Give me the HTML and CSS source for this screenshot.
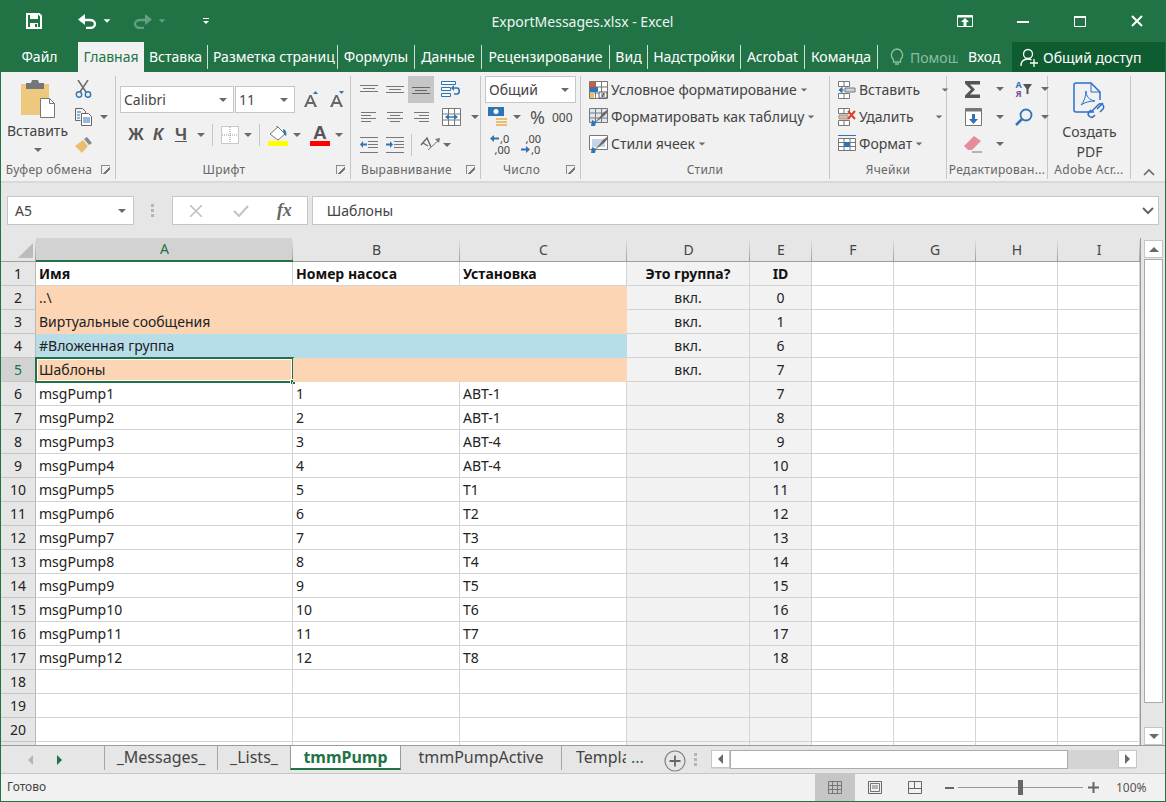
FILE: index.html
```html
<!DOCTYPE html>
<html lang="ru">
<head>
    <meta charset="UTF-8">
    <title>ExportMessages.xlsx - Excel</title>
    <link rel="stylesheet" href="styles.css">
</head>
<body>
<div class="window">
    <header class="titlebar">
        <div class="qat">
            <svg class="save" width="16" height="16" viewBox="0 0 16 16"><path d="M1 1h12l2 2v12H1z" fill="none" stroke="#fff" stroke-width="2"/><path d="M4 1h8v5H4z" fill="#fff"/><path d="M4 10h8v5H4z" fill="#fff"/><path d="M9 11h2v3H9z" fill="#217346"/></svg>
            <svg class="undo" width="19" height="15" viewBox="0 0 19 15"><path d="M2 6h10a5 4 0 0 1 0 8H8" fill="none" stroke="#fff" stroke-width="2.4"/><path d="M7 0v11L0 5.500z" fill="#fff"/></svg>
            <span class="caret white"></span>
            <svg class="redo" width="19" height="15" viewBox="0 0 19 15"><path d="M17 6H7a5 4 0 0 0 0 8h4" fill="none" stroke="#62a083" stroke-width="2.4"/><path d="M12 0v11l7-5.500z" fill="#62a083"/></svg>
            <span class="caret dim"></span>
            <span class="customize"></span>
        </div>
        <div class="doc-title">ExportMessages.xlsx - Excel</div>
        <div class="win-controls">
            <svg class="ctl-ribbon" width="16" height="12" viewBox="0 0 16 12"><path d="M.5.500h15v11H.5z" fill="none" stroke="#fff"/><path d="M.5.500h15v2H.5z" fill="#fff"/><path d="M8 3l4 4H9.500v4h-3V7H4z" fill="#fff"/></svg>
            <svg class="ctl-min" width="12" height="12" viewBox="0 0 12 12"><path d="M0 6h12v2H0z" fill="#fff"/></svg>
            <svg class="ctl-max" width="12" height="12" viewBox="0 0 12 12"><path d="M.5 1.500h11v10H.5z" fill="none" stroke="#fff"/><path d="M0 1h12v2H0z" fill="#fff"/></svg>
            <svg class="ctl-close" width="12" height="12" viewBox="0 0 12 12"><path d="M1 1l10 10M11 1L1 11" stroke="#fff" stroke-width="2"/></svg>
        </div>
    </header>

    <nav class="tabs">
        <span class="tab tab-file">Файл</span>
        <span class="tab tab-active">Главная</span>
        <span class="tab w-58">Вставка</span>
        <span class="tab w-130">Разметка страниц</span>
        <span class="tab w-77">Формулы</span>
        <span class="tab w-67">Данные</span>
        <span class="tab w-128">Рецензирование</span>
        <span class="tab w-38">Вид</span>
        <span class="tab w-93">Надстройки</span>
        <span class="tab w-64">Acrobat</span>
        <span class="tab w-73">Команда</span>
        <span class="tab-help">
            <svg width="14" height="18" viewBox="0 0 14 18"><path d="M7 1a6 6 0 0 0-3.500 10.500V14h7v-2.500A6 6 0 0 0 7 1z" fill="none" stroke="#8fbca5" stroke-width="1.300"/><path d="M5 16h4" stroke="#8fbca5" stroke-width="1.500"/></svg>
            <span class="help-text">Помощ</span>
        </span>
        <span class="tab-login">Вход</span>
        <span class="share">
            <svg width="18" height="19" viewBox="0 0 18 19"><circle cx="8" cy="6" r="4.500" fill="none" stroke="#fff" stroke-width="1.300"/><path d="M1 18c0-5 3-7 7-7 1.500 0 2.500.3 3.500 1" fill="none" stroke="#fff" stroke-width="1.300"/><path d="M10 15h8M14 11v8" stroke="#fff" stroke-width="1.300"/></svg>
            Общий доступ
        </span>
    </nav>

    <section class="ribbon">
        <div class="group g-clip">
            <div class="group-body clip-body">
                <div class="paste">
                    <svg width="34" height="38" viewBox="0 0 34 38"><path d="M0 4h28v31H0z" fill="#edc87e"/><path d="M5 3h5l1-3h6l1 3h5v6H5z" fill="#767676"/><path d="M19.500 18.500h9l5 5v14h-14z" fill="#fff" stroke="#777"/><path d="M28.500 18.500v5h5" fill="none" stroke="#777"/></svg>
                    <span class="paste-label">Вставить</span>
                    <span class="caret"></span>
                </div>
                <div class="clip-tools">
                    <svg width="17" height="18" viewBox="0 0 17 18"><path d="M3 0l8 12M13 0L5 12" stroke="#6a6a6a" stroke-width="1.500"/><circle cx="4" cy="14.500" r="2.700" fill="none" stroke="#2f75b5" stroke-width="1.400"/><circle cx="13" cy="14.500" r="2.700" fill="none" stroke="#2f75b5" stroke-width="1.400"/></svg>
                    <div class="row-tool"><svg width="18" height="18" viewBox="0 0 18 18"><path d="M.5.500h7l3 3v3M.5.500v12h5" fill="none" stroke="#666"/><path d="M6.500 5.500h7l3 3v9h-10z" fill="#fff" stroke="#666"/><path d="M2 4h4M2 7h3M2 10h3" stroke="#2f75b5"/><path d="M8 10h7M8 12h7M8 14h7" stroke="#2f75b5"/></svg><span class="caret"></span></div>
                    <svg width="18" height="16" viewBox="0 0 18 16"><path d="M0 9l8-6 5 6-6 7z" fill="#e8bf72"/><path d="M9 2l3-2 5 6-3 2z" fill="#888"/></svg>
                </div>
            </div>
            <div class="group-label">Буфер обмена<i class="launcher"></i></div>
        </div>

        <div class="group g-font">
            <div class="group-body font-body">
                <div class="font-top">
                    <span class="combo font-name">Calibri<span class="caret"></span></span>
                    <span class="combo font-size">11<span class="caret"></span></span>
                    <svg class="grow" width="16" height="17" viewBox="0 0 16 17"><path d="M1 16L6.500 4h2L14 16h-2.500l-1.200-3H4.700l-1.200 3zM5.500 11h4L7.500 6z" fill="#666"/><path d="M10 3l2.500-3L15 3z" fill="#2f75b5"/></svg>
                    <svg class="shrink" width="16" height="17" viewBox="0 0 16 17"><path d="M1 16L6.500 4h2L14 16h-2.500l-1.200-3H4.700l-1.200 3zM5.500 11h4L7.500 6z" fill="#666"/><path d="M10 0l2.500 3L15 0z" fill="#2f75b5"/></svg>
                </div>
                <div class="font-bottom">
                    <b class="fmt fmt-b">Ж</b>
                    <b class="fmt fmt-i">К</b>
                    <b class="fmt fmt-u">Ч</b>
                    <span class="caret"></span>
                    <i class="vsep"></i>
                    <svg width="18" height="18" viewBox="0 0 18 18"><path d="M.5.500h17v17H.5z" fill="#fff" stroke="#999" stroke-dasharray="1 1"/><path d="M9 1v16M1 9h16" stroke="#999" stroke-dasharray="1 1"/></svg>
                    <span class="caret"></span>
                    <i class="vsep"></i>
                    <span class="color-tool">
                        <svg width="20" height="15" viewBox="0 0 20 15"><path d="M2 8l8-7 7 7-7 6z" fill="#fff" stroke="#777"/><path d="M10 1L8 0" stroke="#777"/><path d="M15 3c3 1 4 4 3 7-2-1-3-4-3-7z" fill="#2f75b5"/></svg>
                        <i class="swatch yellow"></i>
                    </span>
                    <span class="caret"></span>
                    <span class="color-tool color-a">
                        <b class="a-letter">A</b>
                        <i class="swatch red"></i>
                    </span>
                    <span class="caret"></span>
                </div>
            </div>
            <div class="group-label">Шрифт<i class="launcher"></i></div>
        </div>

        <div class="group g-align">
            <div class="group-body align-body">
                <svg class="ico" width="18" height="10" viewBox="0 0 18 10"><path d="M0 .500h18M3 3.500h12M0 6.500h18" stroke="#777"/></svg>
                <svg class="ico" width="18" height="10" viewBox="0 0 18 10"><path d="M0 1.500h18M3 4.500h12M0 7.500h18" stroke="#777"/></svg>
                <span class="ico align-on"><svg width="18" height="10" viewBox="0 0 18 10"><path d="M0 2.500h18M3 5.500h12M0 8.500h18" stroke="#666"/></svg></span>
                <svg class="ico" width="20" height="18" viewBox="0 0 20 18"><path d="M.5.500h14v3H.5zM.5 6.500h9v3H.5zM.5 12.500h9v3H.5z" fill="#fff" stroke="#2f75b5"/><path d="M13 13h3c3 0 3-6 0-6h-5" fill="none" stroke="#2f75b5" stroke-width="1.600"/><path d="M13 4l-3 3 3 3z" fill="#2f75b5"/></svg>
                <span></span>

                <svg class="ico" width="16" height="11" viewBox="0 0 16 11"><path d="M0 .500h15M0 3.500h10M0 6.500h15M0 9.500h10" stroke="#777"/></svg>
                <svg class="ico" width="16" height="11" viewBox="0 0 16 11"><path d="M0 .500h16M3 3.500h10M0 6.500h16M3 9.500h10" stroke="#777"/></svg>
                <svg class="ico" width="16" height="11" viewBox="0 0 16 11"><path d="M1 .500h15M6 3.500h10M1 6.500h15M6 9.500h10" stroke="#777"/></svg>
                <svg class="ico" width="19" height="18" viewBox="0 0 19 18"><path d="M.5.500h18v17H.5zM.5 6h18M.5 12h18M6.500.500V6M12.500.500V6M6.500 12v5.500M12.500 12v5.500" fill="#fff" stroke="#777"/><path d="M4 9h11" stroke="#2f75b5" stroke-width="1.500"/><path d="M7 6l-4 3 4 3zM12 6l4 3-4 3z" fill="#2f75b5"/></svg>
                <span class="caret"></span>

                <svg class="ico" width="18" height="16" viewBox="0 0 18 16"><path d="M0 .500h18M8 4.500h10M8 7.500h10M8 10.500h10M0 15.500h18" stroke="#777"/><path d="M7 6.500H3V4L0 7.500 3 11V8.500h4z" fill="#2f75b5"/></svg>
                <svg class="ico" width="18" height="16" viewBox="0 0 18 16"><path d="M0 .500h18M8 4.500h10M8 7.500h10M8 10.500h10M0 15.500h18" stroke="#777"/><path d="M0 6.500h4V4l3 3.500L4 11V8.500H0z" fill="#2f75b5"/></svg>
                <span class="orient">
                    <i class="vsep"></i>
                    <svg width="21" height="18" viewBox="0 0 21 18"><path d="M1 9l6-7 4 9M3 7l5 3" fill="none" stroke="#666" stroke-width="1.400"/><path d="M8 14l11-10" stroke="#777"/><path d="M15 3l5-1-1 5z" fill="#777"/></svg>
                    <span class="caret"></span>
                </span>
            </div>
            <div class="group-label">Выравнивание<i class="launcher"></i></div>
        </div>

        <div class="group g-number">
            <div class="group-body number-body">
                <span class="combo number-format">Общий<span class="caret"></span></span>
                <div class="number-row">
                    <svg width="20" height="20" viewBox="0 0 20 20"><path d="M0 0h16v9H0z" fill="#2f75b5"/><circle cx="8" cy="4.500" r="2.500" fill="#fff"/><path d="M8 11h11v2H8zM8 14h11v2H8zM8 17h11v2H8z" fill="#e8bf72"/></svg>
                    <span class="caret"></span>
                    <span class="percent">%</span>
                    <span class="thousands">000</span>
                </div>
                <div class="number-row decimals">
                    <span class="dec"><svg width="9" height="7" viewBox="0 0 9 7"><path d="M4 0L0 3.500 4 7V4.500h5v-2H4z" fill="#2f75b5"/></svg><span>,0</span><span class="dec-wide">,00</span></span>
                    <span class="dec"><span class="dec-wide">,00</span><svg width="9" height="7" viewBox="0 0 9 7"><path d="M5 0l4 3.500L5 7V4.500H0v-2h5z" fill="#2f75b5"/></svg><span>,0</span></span>
                </div>
            </div>
            <div class="group-label">Число<i class="launcher"></i></div>
        </div>

        <div class="group g-styles">
            <div class="group-body list-body">
                <div class="list-item">
                    <svg width="19" height="18" viewBox="0 0 19 18"><path d="M.5.500h18v17H.5zM.5 6h18M.5 12h18M6.500.500v17M12.500.500v17" fill="#fff" stroke="#777"/><path d="M1 1h5v5H1z" fill="#d8593a"/><path d="M1 6h8v5H1z" fill="#2f75b5"/><path d="M1 12h4v5H1z" fill="#e8bf72"/><path d="M10 11h8v6h-8z" fill="#fff" stroke="#555"/><path d="M12 13h4M12 15h4M15 12l-2 4" stroke="#333" stroke-width=".8"/></svg>
                    Условное форматирование<span class="caret"></span>
                </div>
                <div class="list-item">
                    <svg width="19" height="18" viewBox="0 0 19 18"><path d="M.5.500h18v14H.5zM.5 5h18M.5 10h18M6.500.500v14M12.500.500v14" fill="#dfe6ef" stroke="#777"/><path d="M4 16l6-6 4-5 4-3 1 1-3 4-5 4z" fill="#666"/><path d="M3 12l4 2-1 4H2z" fill="#2f75b5"/></svg>
                    Форматировать как таблицу<span class="caret"></span>
                </div>
                <div class="list-item">
                    <svg width="19" height="18" viewBox="0 0 19 18"><path d="M.5.500h18v14H.5z" fill="#fff" stroke="#777"/><path d="M3 4h13v8H3z" fill="#c5d4e6"/><path d="M4 16l6-6 4-5 4-3 1 1-3 4-5 4z" fill="#666"/><path d="M3 12l4 2-1 4H2z" fill="#2f75b5"/></svg>
                    Стили ячеек<span class="caret"></span>
                </div>
            </div>
            <div class="group-label plain">Стили</div>
        </div>

        <div class="group g-cells">
            <div class="group-body list-body">
                <div class="list-item">
                    <svg width="18" height="18" viewBox="0 0 18 18"><path d="M.5.500h11v5H.5zM.5 12.500h11v5H.5zM6 .500v5M6 12.500v5" fill="#fff" stroke="#777"/><path d="M7 7h10v4H7z" fill="#c5d4e6" stroke="#777"/><path d="M6 9H2M4 6.500L1 9l3 2.500z" fill="#2f75b5" stroke="#2f75b5"/></svg>
                    Вставить<span class="caret c-1"></span>
                </div>
                <div class="list-item">
                    <svg width="18" height="18" viewBox="0 0 18 18"><path d="M.5.500h11v5H.5zM.5 12.500h11v5H.5zM6 .500v5M6 12.500v5" fill="#fff" stroke="#777"/><path d="M1 7h9v4H1z" fill="#e9b49c" stroke="#999"/><path d="M10 3l7 8M17 3l-7 8" stroke="#d8432a" stroke-width="2"/></svg>
                    Удалить<span class="caret c-2"></span>
                </div>
                <div class="list-item">
                    <svg width="18" height="20" viewBox="0 0 18 20"><path d="M0 1.500h18" stroke="#2f75b5"/><path d="M.5 4.500h17v12H.5zM.5 8.500h17M.5 12.500h17M6 4.500v12M12 4.500v12" fill="#fff" stroke="#777"/><path d="M6 8h6v5H6z" fill="#2f75b5"/></svg>
                    Формат<span class="caret"></span>
                </div>
            </div>
            <div class="group-label plain">Ячейки</div>
        </div>

        <div class="group g-edit">
            <div class="group-body edit-body">
                <svg class="ico" width="16" height="17" viewBox="0 0 16 17"><path d="M0 0h15v3.500H5l5 5-5 5h10V17H0v-2.500L6 8.500 0 2.500z" fill="#555"/></svg>
                <span class="caret"></span>
                <span class="sort"><span class="sort-az"><i>А</i><i class="ya">Я</i></span><svg width="9" height="10" viewBox="0 0 9 10"><path d="M0 0h9L5.500 5v5h-2V5z" fill="#555"/></svg></span>
                <span class="caret"></span>
                <svg class="ico" width="17" height="18" viewBox="0 0 17 18"><path d="M.5.500h16v17H.5z" fill="#fff" stroke="#777"/><path d="M.5.500h16v3H.5z" fill="#777"/><path d="M7 6h3v5h3l-4.500 5L4 11h3z" fill="#2f75b5"/></svg>
                <span class="caret"></span>
                <svg class="ico" width="18" height="18" viewBox="0 0 18 18"><circle cx="11" cy="7" r="5.500" fill="none" stroke="#2f75b5" stroke-width="1.800"/><path d="M7 11l-6 6" stroke="#2f75b5" stroke-width="2.500"/></svg>
                <span class="caret"></span>
                <svg class="ico" width="18" height="17" viewBox="0 0 18 17"><path d="M0 10L10 0l7 5-9 9H4z" fill="#e58d9a"/><path d="M8 16h10" stroke="#777"/></svg>
                <span class="caret"></span>
            </div>
            <div class="group-label plain">Редактирован...</div>
        </div>

        <div class="group g-adobe">
            <div class="group-body adobe-body">
                <svg width="34" height="38" viewBox="0 0 34 38"><path d="M21 30H3a2 2 0 0 1-2-2V3a2 2 0 0 1 2-2h15l9 9v8" fill="none" stroke="#2b6fce" stroke-width="1.500"/><path d="M18 1v9h9" fill="none" stroke="#2b6fce"/><path d="M8 23c3-3 5-9 5-14 0 5 3 9 9 10-5 0-10 1-14 4z" fill="none" stroke="#2b6fce"/><path d="M18 30l7-7a3 3 0 0 1 5 4l-3 3M22 33l-1 1a3 3 0 0 1-5-4l2-2M30 21l-6 6" fill="none" stroke="#2b6fce" stroke-width="1.500"/></svg>
                <span class="adobe-text">Создать<br>PDF</span>
            </div>
            <div class="group-label plain">Adobe Acr...</div>
        </div>
        <svg class="collapse" width="12" height="7" viewBox="0 0 12 7"><path d="M1 6l5-5 5 5" fill="none" stroke="#666" stroke-width="1.600"/></svg>
    </section>

    <section class="formula">
        <div class="name-box">A5<span class="caret"></span></div>
        <div class="grip"><i></i><i></i><i></i></div>
        <div class="fx-box">
            <svg width="12" height="12" viewBox="0 0 12 12"><path d="M0 0l12 12M12 0L0 12" stroke="#c4c4c4" stroke-width="1.600"/></svg>
            <svg width="16" height="12" viewBox="0 0 16 12"><path d="M1 6l5 5L15 1" fill="none" stroke="#c4c4c4" stroke-width="2"/></svg>
            <span class="fx">fx</span>
        </div>
        <div class="formula-input">Шаблоны
            <svg width="12" height="8" viewBox="0 0 12 8"><path d="M1 1l5 5 5-5" fill="none" stroke="#666" stroke-width="2"/></svg>
        </div>
    </section>

    <section class="sheet">
        <div class="grid-wrap">
            <table class="grid">
                <colgroup>
                    <col class="c-head"><col class="c-a"><col class="c-b"><col class="c-b"><col class="c-d"><col class="c-e"><col class="c-f"><col class="c-f"><col class="c-f"><col class="c-f">
                </colgroup>
                <tr class="col-heads">
                    <th class="corner"><i></i></th><th class="sel-col">A</th><th>B</th><th>C</th><th>D</th><th>E</th><th>F</th><th>G</th><th>H</th><th>I</th>
                </tr>
                <tr class="bold"><th>1</th><td>Имя</td><td>Номер насоса</td><td>Установка</td><td class="shade mid">Это группа?</td><td class="shade mid">ID</td><td></td><td></td><td></td><td></td></tr>
                <tr><th>2</th><td class="orange" colspan="3">..\</td><td class="shade mid">вкл.</td><td class="shade mid">0</td><td></td><td></td><td></td><td></td></tr>
                <tr><th>3</th><td class="orange" colspan="3">Виртуальные сообщения</td><td class="shade mid">вкл.</td><td class="shade mid">1</td><td></td><td></td><td></td><td></td></tr>
                <tr><th>4</th><td class="blue" colspan="3">#Вложенная группа</td><td class="shade mid">вкл.</td><td class="shade mid">6</td><td></td><td></td><td></td><td></td></tr>
                <tr><th class="sel-row">5</th><td class="orange active">Шаблоны<span class="cursor"><i class="handle"></i></span></td><td class="orange" colspan="2"></td><td class="shade mid">вкл.</td><td class="shade mid">7</td><td></td><td></td><td></td><td></td></tr>
                <tr><th>6</th><td>msgPump1</td><td>1</td><td>АВТ-1</td><td class="shade"></td><td class="shade mid">7</td><td></td><td></td><td></td><td></td></tr>
                <tr><th>7</th><td>msgPump2</td><td>2</td><td>АВТ-1</td><td class="shade"></td><td class="shade mid">8</td><td></td><td></td><td></td><td></td></tr>
                <tr><th>8</th><td>msgPump3</td><td>3</td><td>АВТ-4</td><td class="shade"></td><td class="shade mid">9</td><td></td><td></td><td></td><td></td></tr>
                <tr><th>9</th><td>msgPump4</td><td>4</td><td>АВТ-4</td><td class="shade"></td><td class="shade mid">10</td><td></td><td></td><td></td><td></td></tr>
                <tr><th>10</th><td>msgPump5</td><td>5</td><td>Т1</td><td class="shade"></td><td class="shade mid">11</td><td></td><td></td><td></td><td></td></tr>
                <tr><th>11</th><td>msgPump6</td><td>6</td><td>Т2</td><td class="shade"></td><td class="shade mid">12</td><td></td><td></td><td></td><td></td></tr>
                <tr><th>12</th><td>msgPump7</td><td>7</td><td>Т3</td><td class="shade"></td><td class="shade mid">13</td><td></td><td></td><td></td><td></td></tr>
                <tr><th>13</th><td>msgPump8</td><td>8</td><td>Т4</td><td class="shade"></td><td class="shade mid">14</td><td></td><td></td><td></td><td></td></tr>
                <tr><th>14</th><td>msgPump9</td><td>9</td><td>Т5</td><td class="shade"></td><td class="shade mid">15</td><td></td><td></td><td></td><td></td></tr>
                <tr><th>15</th><td>msgPump10</td><td>10</td><td>Т6</td><td class="shade"></td><td class="shade mid">16</td><td></td><td></td><td></td><td></td></tr>
                <tr><th>16</th><td>msgPump11</td><td>11</td><td>Т7</td><td class="shade"></td><td class="shade mid">17</td><td></td><td></td><td></td><td></td></tr>
                <tr><th>17</th><td>msgPump12</td><td>12</td><td>Т8</td><td class="shade"></td><td class="shade mid">18</td><td></td><td></td><td></td><td></td></tr>
                <tr><th>18</th><td></td><td></td><td></td><td class="shade"></td><td class="shade"></td><td></td><td></td><td></td><td></td></tr>
                <tr><th>19</th><td></td><td></td><td></td><td class="shade"></td><td class="shade"></td><td></td><td></td><td></td><td></td></tr>
                <tr><th>20</th><td></td><td></td><td></td><td class="shade"></td><td class="shade"></td><td></td><td></td><td></td><td></td></tr>
                <tr><th></th><td></td><td></td><td></td><td class="shade"></td><td class="shade"></td><td></td><td></td><td></td><td></td></tr>
            </table>
        </div>
        <div class="vscroll">
            <span class="sb-btn"><i class="tri up"></i></span>
            <span class="sb-thumb"></span>
            <span class="sb-btn sb-end"><i class="tri down"></i></span>
        </div>
    </section>

    <section class="sheetbar">
        <div class="sheet-nav"><i class="tri left off"></i><i class="tri right on"></i></div>
        <div class="sheet-tab st-msg">_Messages_</div>
        <div class="sheet-tab st-lists">_Lists_</div>
        <div class="sheet-tab st-active">tmmPump</div>
        <div class="sheet-tab st-pa">tmmPumpActive</div>
        <div class="sheet-tab st-tpl">Templa</div>
        <span class="more">...</span>
        <svg class="add" width="22" height="22" viewBox="0 0 22 22"><circle cx="11" cy="11" r="10" fill="none" stroke="#808080" stroke-width="1.200"/><path d="M11 5.500v11M5.500 11h11" stroke="#666" stroke-width="1.800"/></svg>
        <div class="grip small"><i></i><i></i><i></i></div>
        <div class="hscroll">
            <span class="sb-btn h"><i class="tri left"></i></span>
            <span class="h-thumb"></span>
            <span class="sb-btn h"><i class="tri right"></i></span>
        </div>
    </section>

    <footer class="status">
        <span class="ready">Готово</span>
        <span class="view view-on"><svg width="14" height="13" viewBox="0 0 14 13"><path d="M.5.500h13v12H.5zM.5 4.500h13M.5 8.500h13M4.500.500v12M9.500.500v12" fill="none" stroke="#777"/></svg></span>
        <span class="view"><svg width="14" height="13" viewBox="0 0 14 13"><path d="M.5.500h13v12H.5z" fill="none" stroke="#666"/><path d="M2.500 2.500h9v8h-9zM4 5h6M4 7h6" fill="none" stroke="#777"/></svg></span>
        <span class="view"><svg width="14" height="13" viewBox="0 0 14 13"><path d="M.5.500h13v12H.5zM.5 7.500h13M6.500.500v7" fill="none" stroke="#666"/></svg></span>
        <div class="zoom">
            <i class="z-minus"></i>
            <span class="z-track"><i class="z-thumb"></i></span>
            <svg width="11" height="11" viewBox="0 0 11 11"><path d="M4.500 0h2v4.500H11v2H6.500V11h-2V6.500H0v-2h4.500z" fill="#666"/></svg>
            <span class="z-val">100%</span>
        </div>
    </footer>
</div>
</body>
</html>
```

FILE: styles.css
```css
* {
    margin: 0;
    padding: 0;
    box-sizing: border-box;
}

body {
    width: 1166px;
    height: 802px;
    overflow: hidden;
    font-family: "Noto Sans", "Open Sans", sans-serif;
    font-size: 14px;
    color: #444;
}

i {
    display: block;
    font-style: normal;
}

svg {
    display: block;
    flex: none;
}

.window {
    width: 1166px;
    height: 802px;
    display: flex;
    flex-direction: column;
    border: 1px solid #217346;
    border-top: 0;
    background: #e6e6e6;
}

.caret {
    display: inline-block;
    flex: none;
    width: 0;
    height: 0;
    border-left: 4px solid transparent;
    border-right: 4px solid transparent;
    border-top: 4px solid #6a6a6a;
}

.caret.white { border-top-color: #fff; }
.caret.dim { border-top-color: #62a083; }

/* title bar */
.titlebar {
    height: 42px;
    flex: none;
    background: #217346;
    color: #fff;
    display: grid;
    grid-template-columns: 1fr auto 1fr;
    align-items: center;
}

.qat {
    display: flex;
    align-items: center;
    padding-left: 25px;
}

.undo { margin-left: 36px; }
.qat .caret { margin-left: 6px; transform: scale(.85); }
.redo { margin-left: 22px; }

.customize {
    width: 6px;
    height: 7px;
    margin-left: 37px;
    border-top: 1px solid #fff;
    position: relative;
}

.customize::after {
    content: "";
    display: block;
    margin-top: 2px;
    border-left: 3px solid transparent;
    border-right: 3px solid transparent;
    border-top: 3px solid #fff;
}

.doc-title {
    font-size: 14px;
    color: #eef5f1;
    margin-right: 1px;
}

.win-controls {
    display: flex;
    align-items: center;
    justify-content: flex-end;
    padding-right: 22px;
}

.ctl-min { margin-left: 44px; }
.ctl-max { margin-left: 45px; }
.ctl-close { margin-left: 45px; }

/* tabs */
.tabs {
    height: 30px;
    flex: none;
    background: #217346;
    color: #fff;
    display: flex;
    align-items: stretch;
}

.tab {
    flex: none;
    height: 24px;
    margin-top: 3px;
    line-height: 24px;
    text-align: center;
    white-space: nowrap;
    overflow: hidden;
    padding: 0 5px;
    border-right: 1px solid #cfe0d7;
}

.tab-file {
    width: 77px;
    border: 0;
    padding: 0;
}

.tab-active {
    width: 66px;
    height: 30px;
    margin-top: 0;
    padding: 3px 0 0;
    border: 0;
    background: #f1f1f1;
    color: #217346;
}

.w-58 { width: 64px; }
.w-130 { width: 130px; text-align: left; }
.w-77 { width: 77px; }
.w-67 { width: 67px; }
.w-128 { width: 128px; }
.w-38 { width: 38px; }
.w-93 { width: 93px; }
.w-64 { width: 64px; }
.w-73 { width: 73px; }

.tab-help {
    display: flex;
    align-items: center;
    width: 80px;
    padding-left: 12px;
    gap: 6px;
    color: #8fbca5;
    overflow: hidden;
    white-space: nowrap;
}

.tab-login {
    width: 54px;
    line-height: 30px;
    padding-left: 10px;
}

.share {
    width: 153px;
    flex: none;
    background: #0f5c30;
    display: flex;
    align-items: center;
    gap: 5px;
    padding-left: 8px;
}

/* ribbon */
.ribbon {
    height: 111px;
    flex: none;
    display: flex;
    padding-top: 4px;
    background: #f1f1f1;
    border-bottom: 2px solid #d9d9d9;
    position: relative;
}

.group {
    height: 103px;
    flex: none;
    display: flex;
    flex-direction: column;
    border-right: 1px solid #c6c6c6;
}

.group-body {
    height: 85px;
    flex: none;
}

.group-label {
    height: 18px;
    font-size: 12px;
    line-height: 17px;
    letter-spacing: .3px;
    color: #666;
    text-align: center;
    white-space: nowrap;
    position: relative;
    padding-right: 18px;
}

.group-label.plain { padding-right: 0; }

.launcher {
    position: absolute;
    right: 5px;
    top: 4px;
    width: 9px;
    height: 9px;
    border-left: 1px solid #8a8a8a;
    border-top: 1px solid #8a8a8a;
    background: linear-gradient(135deg, transparent 55%, #777 55%, #777 70%, transparent 70%);
}

.g-clip { width: 115px; }
.g-font { width: 235px; }
.g-align { width: 130px; }
.g-number { width: 100px; }
.g-styles { width: 249px; }
.g-cells { width: 117px; }
.g-edit { width: 101px; }
.g-adobe { width: 83px; }

.collapse {
    position: absolute;
    left: 1142px;
    top: 97px;
}

.clip-body {
    display: flex;
}

.paste {
    width: 73px;
    display: flex;
    flex-direction: column;
    align-items: center;
    padding-top: 4px;
}

.paste-label {
    margin-top: 3px;
    line-height: 20px;
}

.paste .caret { margin-top: 7px; }

.clip-tools {
    padding: 4px 0 0 1px;
    display: flex;
    flex-direction: column;
    gap: 10px;
}

.row-tool {
    display: flex;
    align-items: center;
    gap: 7px;
}

.clip-tools > svg:last-child { margin-top: 1px; }

/* font group */
.font-body {
    padding: 10px 0 0 4px;
}

.font-top {
    display: flex;
    align-items: center;
    gap: 1px;
}

.combo {
    height: 27px;
    background: #fff;
    border: 1px solid #c6c6c6;
    display: flex;
    align-items: center;
    justify-content: space-between;
    padding: 0 6px 0 3px;
    color: #444;
}

.font-name { width: 114px; }
.font-size { width: 60px; }
.grow { margin-left: 7px; }
.shrink { margin-left: 9px; }

.font-bottom {
    display: flex;
    align-items: center;
    height: 24px;
    margin-top: 10px;
    padding-left: 5px;
}

.fmt {
    font-size: 17px;
    width: 26px;
    font-weight: 700;
    color: #555;
    text-align: center;
    font-family: "Liberation Sans", sans-serif;
}

.fmt-b { width: 25px; }
.fmt-i { font-style: italic; }
.fmt-u { text-decoration: underline; }
.font-bottom .caret { margin: 0 7px 0 5px; }

.vsep {
    width: 1px;
    height: 22px;
    background: #c6c6c6;
    margin-right: 8px;
}

.color-tool {
    width: 20px;
    display: flex;
    flex-direction: column;
    margin-top: 2px;
}

.color-a {
    margin-left: 2px;
    margin-top: 0;
}

.a-letter {
    font-family: "Liberation Sans", sans-serif;
    font-size: 19px;
    line-height: 17px;
    text-align: center;
    color: #555;
}

.swatch {
    height: 5px;
    width: 20px;
}

.yellow { background: #ffff00; }
.red { background: #ff0000; }

/* alignment */
.align-body {
    display: grid;
    grid-template-columns: 26px 26px 26px 34px 14px;
    grid-template-rows: 27px 28px 28px;
    align-items: center;
    justify-items: center;
    padding-left: 5px;
}

.align-on {
    width: 26px;
    height: 27px;
    background: #c6c6c6;
    display: flex;
    align-items: center;
    justify-content: center;
}

.orient {
    grid-column: 3 / span 3;
    justify-self: start;
    display: flex;
    align-items: center;
    padding-left: 3px;
}

.orient svg { margin-right: 2px; }
.orient .vsep { height: 22px; }

/* number */
.number-body {
    padding-left: 4px;
}

.number-format {
    width: 91px;
    border-color: #c6c6c6;
}

.number-row {
    display: flex;
    align-items: center;
    height: 28px;
    padding-left: 3px;
}

.number-row .caret { margin-left: 5px; }

.percent {
    font-size: 18px;
    margin-left: 9px;
    color: #555;
}

.thousands {
    font-size: 12px;
    margin-left: 7px;
}

.decimals {
    height: 26px;
    gap: 11px;
    padding-left: 5px;
}

.dec {
    display: grid;
    grid-template-columns: 10px 10px;
    align-items: center;
    font-size: 11px;
    line-height: 11px;
    color: #444;
}

.dec-wide {
    grid-column: 1 / span 2;
    text-align: right;
}

/* styles and cells lists */
.list-body {
    padding-left: 8px;
}

.list-item {
    height: 27px;
    display: flex;
    align-items: center;
    gap: 3px;
    white-space: nowrap;
}

.list-item .caret {
    transform: scale(.8);
}

.c-1 { margin-left: 18px; }
.c-2 { margin-left: 18px; }

.edit-body {
    display: grid;
    grid-template-columns: 36px 18px 29px 14px;
    grid-template-rows: 26px 29px 26px;
    align-items: center;
    justify-items: center;
    padding-left: 8px;
}

.sort {
    display: flex;
    align-items: center;
    gap: 1px;
}

.sort-az {
    font-size: 9px;
    line-height: 9px;
    font-weight: 700;
    color: #2f75b5;
}

.ya { color: #7c4ea3; }

.adobe-body {
    display: flex;
    flex-direction: column;
    align-items: center;
    padding-top: 6px;
    padding-left: 1px;
}

.adobe-text {
    margin-top: 2px;
    line-height: 20px;
    text-align: center;
}

/* formula bar */
.formula {
    height: 55px;
    flex: none;
    display: flex;
    padding: 13px 6px 13px 6px;
    background: #e6e6e6;
}

.name-box {
    width: 127px;
    height: 29px;
    background: #fff;
    border: 1px solid #c6c6c6;
    display: flex;
    align-items: center;
    justify-content: space-between;
    padding: 0 7px;
    color: #444;
}

.grip {
    width: 38px;
    display: flex;
    flex-direction: column;
    align-items: center;
    justify-content: center;
    gap: 2px;
}

.grip i {
    width: 3px;
    height: 3px;
    background: #b5b5b5;
}

.fx-box {
    width: 136px;
    height: 29px;
    background: #fff;
    border: 1px solid #c6c6c6;
    display: flex;
    align-items: center;
    padding-left: 17px;
    gap: 31px;
}

.fx {
    font-family: "Liberation Serif", serif;
    font-style: italic;
    font-weight: 700;
    font-size: 18px;
    color: #666;
    margin-left: -3px;
}

.formula-input {
    width: 848px;
    height: 29px;
    margin-left: 4px;
    background: #fff;
    border: 1px solid #c6c6c6;
    display: flex;
    align-items: center;
    justify-content: space-between;
    padding: 0 4px 0 14px;
}

/* grid */
.sheet {
    height: 507px;
    flex: none;
    display: flex;
    overflow: hidden;
}

.grid-wrap {
    width: 1140px;
    height: 507px;
    overflow: hidden;
    background: #fff;
    border-right: 1px solid #9a9a9a;
}

.grid {
    table-layout: fixed;
    width: 1139px;
    border-collapse: separate;
    border-spacing: 0;
    color: #222;
}

.c-head { width: 35px; }
.c-a { width: 257px; }
.c-b { width: 167px; }
.c-d { width: 123px; }
.c-e { width: 62px; }
.c-f { width: 82px; }

.grid tr { height: 24px; }

.grid th,
.grid td {
    height: 24px;
    padding: 0;
    font-weight: 400;
    white-space: nowrap;
}

.grid td {
    padding-left: 3px;
    border-right: 1px solid #d4d4d4;
    border-bottom: 1px solid #d4d4d4;
    overflow: visible;
    position: relative;
}

.grid th {
    background: #e6e6e6;
    border-right: 1px solid #b9b9b9;
    border-bottom: 1px solid #c6c6c6;
    text-align: center;
    color: #222;
}

.col-heads th {
    border-right: 0;
    border-bottom: 1px solid #9e9e9e;
    background-image: linear-gradient(#e6e6e6, #9e9e9e);
    background-size: 1px 100%;
    background-position: right top;
    background-repeat: no-repeat;
    color: #444;
    padding-bottom: 1px;
}

.col-heads .sel-col {
    background-color: #d2d2d2;
    color: #217346;
    border-bottom: 2px solid #217346;
}

.corner i {
    width: 0;
    height: 0;
    margin: 3px 0 0 17px;
    border-left: 15px solid transparent;
    border-bottom: 15px solid #bcbcbc;
}

.grid .sel-row {
    background: #d2d2d2;
    color: #217346;
}

.bold td { font-weight: 700; color: #111; }
.shade { background: #f2f2f2; }
.mid { text-align: center; }
.grid td.mid { padding-left: 0; }

.grid td.orange {
    background: #fcd5b4;
    border-color: #fcd5b4;
}

.grid td.blue {
    background: #b7dee8;
    border-color: #b7dee8;
}

.grid td.active { border-right-color: #fcd5b4; }

.cursor {
    position: absolute;
    left: -1px;
    top: -1px;
    width: 259px;
    height: 26px;
    border: 2px solid #217346;
    box-shadow: inset 0 0 0 1px #fff;
}

.handle {
    position: absolute;
    right: -4px;
    bottom: -4px;
    width: 6px;
    height: 6px;
    background: #217346;
    border: 1px solid #fff;
    box-sizing: content-box;
    width: 4px;
    height: 4px;
}

/* scrollbars */
.vscroll {
    width: 19px;
    margin-left: 3px;
    padding-top: 2px;
    display: flex;
    flex-direction: column;
}

.sb-btn {
    width: 19px;
    height: 18px;
    flex: none;
    background: #fff;
    border: 1px solid #c6c6c6;
    display: flex;
    align-items: center;
    justify-content: center;
}

.sb-thumb {
    width: 19px;
    height: 444px;
    margin-top: 1px;
    background: #fff;
    border: 1px solid #ababab;
}

.sb-end {
    margin-top: 24px;
}

.tri {
    width: 0;
    height: 0;
    border: 5px solid transparent;
}

.tri.up { border-top: 0; border-bottom-color: #6a6a6a; border-bottom-width: 5px; }
.tri.down { border-bottom: 0; border-top-color: #6a6a6a; }
.tri.left { border-left: 0; border-right-color: #6a6a6a; }
.tri.right { border-right: 0; border-left-color: #6a6a6a; }
.tri.off { border-right-color: #b5b5b5; }
.tri.on { border-left-color: #217346; }

/* sheet tabs */
.sheetbar {
    height: 29px;
    flex: none;
    display: flex;
    align-items: flex-start;
    background: #e6e6e6;
    border-top: 1px solid #9a9a9a;
    border-bottom: 1px solid #c6c6c6;
}

.sheet-nav {
    width: 103px;
    height: 27px;
    display: flex;
    align-items: center;
    padding-left: 27px;
    gap: 24px;
}

.sheet-tab {
    height: 24px;
    margin-top: 0;
    font-size: 16px;
    line-height: 22px;
    color: #444;
    flex: none;
    text-align: center;
    border-left: 1px solid #a6a6a6;
    white-space: nowrap;
    overflow: hidden;
}

.st-msg { width: 113px; }
.st-lists { width: 73px; border-right: 0; }

.st-active {
    width: 111px;
    height: 24px;
    background: #fff;
    color: #217346;
    font-weight: 700;
    border-left: 1px solid #9a9a9a;
    border-right: 1px solid #9a9a9a;
    border-bottom: 2px solid #217346;
}

.st-pa {
    width: 160px;
    border-left: 0;
}

.st-tpl {
    width: 65px;
    text-align: left;
    padding-left: 14px;
}

.more {
    width: 21px;
    margin-left: 5px;
    line-height: 22px;
    font-size: 16px;
    color: #217346;
}

.add { margin: 4px 0 0 12px; }

.grip.small {
    width: 18px;
    height: 27px;
}

.hscroll {
    display: flex;
    width: 425px;
    height: 19px;
    margin: 4px 0 0 7px;
    background: #d4d4d4;
}

.sb-btn.h { border-color: #c6c6c6; }

.h-thumb {
    width: 338px;
    margin-right: 50px;
    background: #fff;
    border: 1px solid #ababab;
    flex: none;
}

/* status bar */
.status {
    height: 26px;
    flex: 1;
    display: flex;
    align-items: stretch;
    background: #f1f1f1;
    font-size: 12px;
}

.ready {
    width: 814px;
    padding-left: 6px;
    line-height: 26px;
}

.view {
    width: 40px;
    display: flex;
    align-items: center;
    justify-content: center;
}

.view-on { background: #c6c6c6; }

.zoom {
    display: flex;
    align-items: center;
    padding-left: 10px;
}

.z-minus {
    width: 9px;
    height: 2px;
    background: #666;
}

.z-track {
    display: block;
    width: 125px;
    height: 1px;
    margin: 0 5px 0 4px;
    background: #999;
    position: relative;
}

.z-thumb {
    position: absolute;
    left: 60px;
    top: -7px;
    width: 5px;
    height: 15px;
    background: #666;
}

.z-val {
    margin-left: 17px;
    color: #555;
}
```
